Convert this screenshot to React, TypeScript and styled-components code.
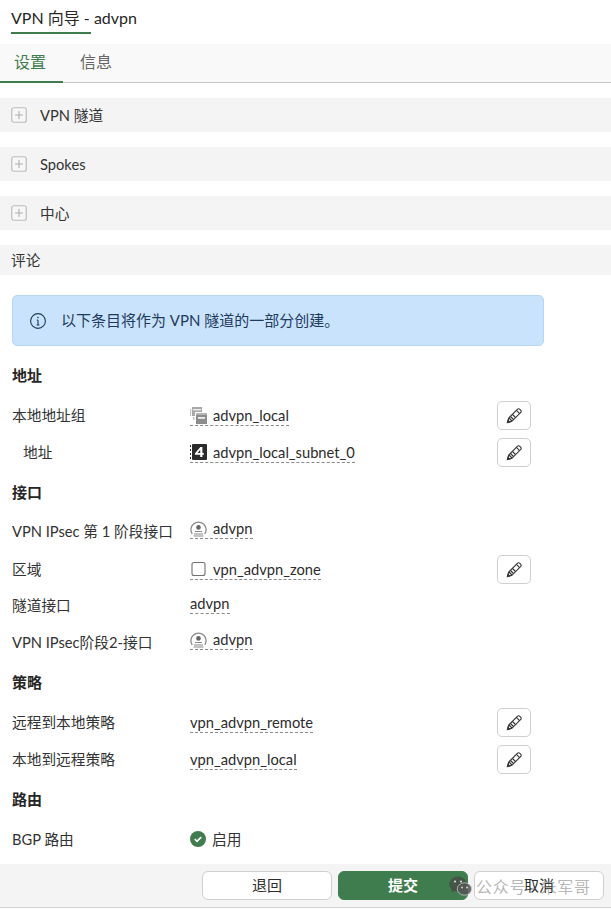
import React from "react";
import styled, { createGlobalStyle } from "styled-components";

const Global = createGlobalStyle`
  html, body { margin: 0; padding: 0; background: #fff; }
  body { font-family: Lato, "Noto Sans CJK SC", sans-serif; color: #2c2c2c; font-size: 14.7px; }
  * { box-sizing: border-box; }
`;
const Page = styled.div`
  position: relative; width: 611px; height: 909px; overflow: hidden; display: flex; flex-direction: column;
`;
const Header = styled.div`height: 44px; padding: 9px 0 0 11px;`;
const Title = styled.div`
  display: inline-block; width: 80px; height: 25px; line-height: 18px; font-size: 16px; white-space: nowrap;
  color: #262626; border-bottom: 2px solid #3f7d4e;
`;
const Tabs = styled.div`
  height: 39px; display: flex; background: #f9f9f9; border-bottom: 1px solid #c8c8c8;
`;
const Tab = styled.div<{ $active?: boolean }>`
  height: 39px; width: ${p => (p.$active ? "63px" : "auto")}; padding-left: ${p => (p.$active ? "14px" : "17px")};
  line-height: 35px; font-size: 16px;
  color: ${p => (p.$active ? "#3f7d4e" : "#666")};
  border-bottom: ${p => (p.$active ? "2px solid #3f7d4e" : "none")};
`;
const Sections = styled.div`
  padding-top: 15px; display: flex; flex-direction: column; gap: 15px;
`;
const Section = styled.div<{ $h: number }>`
  height: ${p => p.$h}px; background: #f4f4f4; display: flex; align-items: center; padding-left: 11px; gap: 13px; font-size: 14.7px; color: #333;
`;
const SectionText = styled.span<{ $lift?: number }>`padding-bottom: ${p => p.$lift ?? 0}px;`;
const Plus = styled.svg`width: 16px; height: 16px; display: block;`;
const Notice = styled.div`
  margin: 20px 0 0 12px; width: 532px; height: 51px; background: #c9e3fc; border: 1px solid #b6d6f4; border-radius: 5px;
  display: flex; align-items: center; padding-left: 16px; gap: 14px; color: #1e3a5c; font-size: 15px; line-height: 18px;
`;
const NoticeText = styled.span`padding-bottom: 2px;`;
const Form = styled.div`padding: 0 0 0 12px; display: flex; flex-direction: column;`;
const Heading = styled.div<{ $top: number }>`
  margin-top: ${p => p.$top}px; height: 20px; line-height: 20px; font-weight: 700; font-size: 15px; color: #262626;
`;
const Row = styled.div<{ $top: number }>`
  margin-top: ${p => p.$top}px; height: 20px; display: flex; align-items: center; position: relative;
`;
const Label = styled.div<{ $indent?: boolean; $drop?: boolean }>`
  width: 178px; padding-left: ${p => (p.$indent ? "11px" : "0")}; font-size: 14.7px; color: #333; white-space: nowrap; line-height: 20px;
  margin-top: ${p => (p.$drop ? "4px" : "0")};
`;
const Value = styled.div<{ $up?: boolean }>`
  display: inline-flex; align-items: center; gap: 6px; height: 20px; line-height: 20px; font-size: 14.7px; color: #2c2c2c;
  border-bottom: 1px dashed #8a8a8a; padding-bottom: 1px; white-space: nowrap; margin-top: ${p => (p.$up ? "0" : "2px")};
`;
const Plain = styled.div`
  display: inline-flex; align-items: center; gap: 6px; height: 20px; font-size: 14.7px; color: #333;
`;
const PlainText = styled.span`padding-bottom: 2px;`;
const EditBtn = styled.div`
  position: absolute; left: 485px; top: -4px; width: 34px; height: 29px; background: #fff; border: 1px solid #cfcfcf; border-radius: 5px;
  display: flex; align-items: center; justify-content: center;
`;
const Footer = styled.div`
  position: absolute; left: 0; right: 0; top: 864px; height: 44px; background: #f4f4f4; border-bottom: 1px solid #d4d4d4;
  display: flex; justify-content: flex-end; gap: 6px; padding: 7px 7px 0 0;
`;
const Btn = styled.div<{ $primary?: boolean }>`
  width: 130px; height: 29px; line-height: 26px; text-align: center; border-radius: 6px; font-size: 15px;
  font-weight: ${p => (p.$primary ? 700 : 400)};
  background: ${p => (p.$primary ? "#3f7d4e" : "#fff")};
  color: ${p => (p.$primary ? "#fff" : "#2c2c2c")};
  border: 1px solid ${p => (p.$primary ? "#3f7d4e" : "#cfcfcf")};
`;
const Watermark = styled.div`
  position: absolute; left: 449px; top: 874px; display: flex; align-items: center; gap: 4px;
  color: rgba(120,120,120,.55); font-size: 16px; letter-spacing: .7px; pointer-events: none;
`;

const PlusIcon = () => (
  <Plus viewBox="0 0 16 16"><rect x=".75" y=".75" width="14.5" height="14.5" rx="2" fill="#f7f7f7" stroke="#bcbcbc" strokeWidth="1.2"/><path d="M8 4v8M4 8h8" stroke="#b0b0b0" strokeWidth="1.1"/></Plus>
);
const Pencil = () => (
  <svg width="17" height="17" viewBox="0 0 17 17" fill="none" stroke="#333" strokeWidth="1.1">
    <path d="M1.5 15.5l1.2-4.4L11.6 2.2a1.4 1.4 0 0 1 2 0l1.2 1.2a1.4 1.4 0 0 1 0 2L5.9 14.3z"/>
    <path d="M10.4 3.4l3.2 3.2M3 11l3 3M4.5 9.5l3 3M6.5 7.5l3 3"/>
    <path d="M1.5 15.5l.6-2.2 1.6 1.6z" fill="#333"/>
  </svg>
);
const GroupIcon = () => (
  <svg width="17" height="17" viewBox="0 0 17 17">
    <rect x="2" y="0" width="10" height="9" fill="#a8a8a8"/><rect x="3" y="2" width="8" height="1.4" fill="#eee"/>
    <path d="M0 2h1.2v7H0z" fill="#c4c4c4"/><path d="M3 10h1.5v3H3z" fill="#c4c4c4"/>
    <rect x="5" y="5" width="12" height="12" fill="#fff"/>
    <rect x="6" y="6" width="11" height="11" fill="#8c8c8c"/><rect x="6" y="6" width="11" height="2" fill="#b5b5b5"/><rect x="8" y="10" width="7" height="1.8" fill="#eee"/>
  </svg>
);
const FourIcon = () => (
  <svg width="17" height="17" viewBox="0 0 17 17">
    <rect x="2" y="0" width="15" height="16" rx="1" fill="#2b2b2b"/>
    <path d="M.5 1v2M.5 5v2M.5 9v2M.5 13v2" stroke="#2b2b2b" strokeWidth="1"/>
    <path d="M10.4 3h2v6h1.4v1.8h-1.4V13h-2.2v-2.2H5V9.2zM10.2 9V5.8L7.6 9z" fill="#fff"/>
  </svg>
);
const TunnelIcon = () => (
  <svg width="17" height="17" viewBox="0 0 17 17" fill="none">
    <path d="M2.2 14A7.6 7.6 0 1 1 14.8 14" stroke="#8a8a8a" strokeWidth="1.3"/>
    <circle cx="8.5" cy="7.4" r="2.3" fill="#666"/>
    <path d="M5 11.5h7M4 14h9M3.5 16h10" stroke="#8a8a8a" strokeWidth="1.1"/>
  </svg>
);
const ZoneIcon = () => (
  <svg width="17" height="16" viewBox="0 0 17 16"><rect x="2" y="1.5" width="13" height="13" rx="2" fill="#fff" stroke="#707070" strokeWidth="1.1"/></svg>
);
const InfoIcon = () => (
  <svg width="18" height="18" viewBox="0 0 18 18" fill="none" stroke="#1e3a5c"><circle cx="9" cy="9" r="7.4" strokeWidth="1.1"/><path d="M9 8v5M7.6 13h2.8M7.8 8H9" strokeWidth="1.1"/><circle cx="9" cy="5.5" r=".8" fill="#1e3a5c" stroke="none"/></svg>
);
const CheckIcon = () => (
  <svg width="16" height="16" viewBox="0 0 16 16"><circle cx="8" cy="8" r="8" fill="#3f7d4e"/><path d="M4.8 8.2l2.2 2.1 4.2-4.2" fill="none" stroke="#fff" strokeWidth="1.7"/></svg>
);
const WeChat = () => (
  <svg width="23" height="20" viewBox="0 0 23 20">
    <ellipse cx="9" cy="8" rx="8.8" ry="7.6" fill="rgba(70,70,70,.72)"/><path d="M3 12l-.5 4.5 4.5-2.5z" fill="rgba(70,70,70,.72)"/>
    <ellipse cx="15.5" cy="13" rx="7.2" ry="6.2" fill="rgba(85,85,85,.85)" stroke="#e8e8e8" strokeWidth=".6"/>
    <circle cx="6" cy="5.5" r="1.1" fill="#ddd"/><circle cx="12" cy="5.5" r="1.1" fill="#ddd"/>
    <circle cx="13" cy="11.5" r=".9" fill="#ddd"/><circle cx="18" cy="11.5" r=".9" fill="#ddd"/>
  </svg>
);

export default function App() {
  return (
    <Page>
      <Global />
      <Header><Title>VPN 向导 - advpn</Title></Header>
      <Tabs><Tab $active>设置</Tab><Tab>信息</Tab></Tabs>
      <Sections>
        <Section $h={34}><PlusIcon /><SectionText $lift={2}>VPN 隧道</SectionText></Section>
        <Section $h={34}><PlusIcon /><SectionText>Spokes</SectionText></Section>
        <Section $h={34}><PlusIcon /><SectionText $lift={2}>中心</SectionText></Section>
        <Section $h={30}><SectionText $lift={2}>评论</SectionText></Section>
      </Sections>
      <Notice><InfoIcon /><NoticeText>以下条目将作为 VPN 隧道的一部分创建。</NoticeText></Notice>
      <Form>
        <Heading $top={19}>地址</Heading>
        <Row $top={20}><Label>本地地址组</Label><Value><GroupIcon />advpn_local</Value><EditBtn><Pencil /></EditBtn></Row>
        <Row $top={17}><Label $indent>地址</Label><Value><FourIcon />advpn_local_subnet_0</Value><EditBtn><Pencil /></EditBtn></Row>
        <Heading $top={20}>接口</Heading>
        <Row $top={17}><Label $drop>VPN IPsec 第 1 阶段接口</Label><Value $up><TunnelIcon />advpn</Value></Row>
        <Row $top={20}><Label>区域</Label><Value><ZoneIcon />vpn_advpn_zone</Value><EditBtn><Pencil /></EditBtn></Row>
        <Row $top={14}><Label $drop>隧道接口</Label><Value>advpn</Value></Row>
        <Row $top={17}><Label $drop>VPN IPsec阶段2-接口</Label><Value $up><TunnelIcon />advpn</Value></Row>
        <Heading $top={22}>策略</Heading>
        <Row $top={20}><Label>远程到本地策略</Label><Value>vpn_advpn_remote</Value><EditBtn><Pencil /></EditBtn></Row>
        <Row $top={17}><Label>本地到远程策略</Label><Value>vpn_advpn_local</Value><EditBtn><Pencil /></EditBtn></Row>
        <Heading $top={20}>路由</Heading>
        <Row $top={20}><Label>BGP 路由</Label><Plain><CheckIcon /><PlainText>启用</PlainText></Plain></Row>
      </Form>
      <Footer><Btn>退回</Btn><Btn $primary>提交</Btn><Btn>取消</Btn></Footer>
      <Watermark><WeChat />公众号 · 朱军哥</Watermark>
    </Page>
  );
}
